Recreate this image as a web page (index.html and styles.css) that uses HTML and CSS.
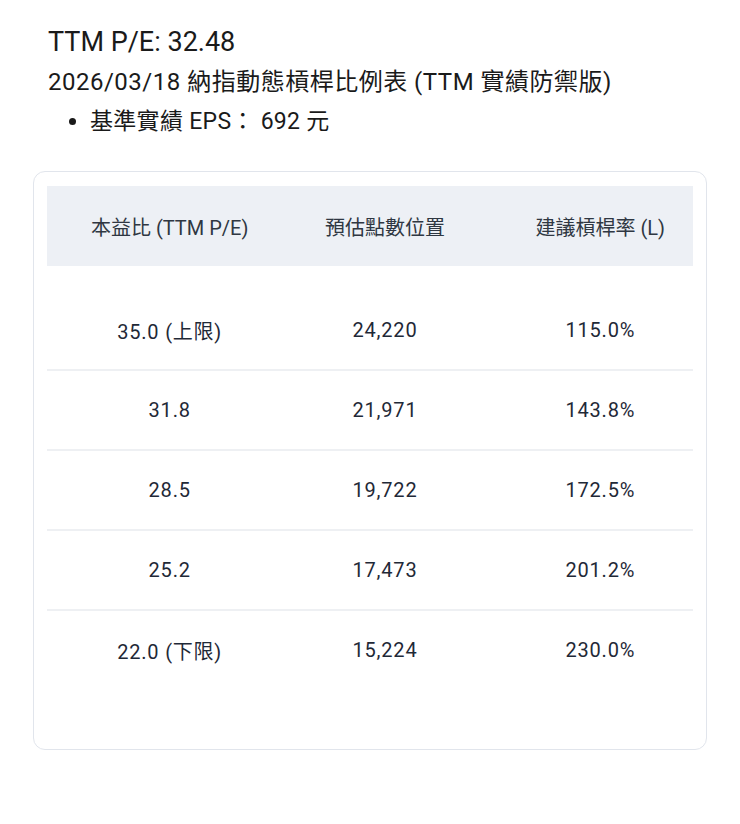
FILE: index.html
```html
<!DOCTYPE html>
<html lang="zh-Hant">
<head>
<meta charset="utf-8">
<link rel="stylesheet" href="styles.css">
</head>
<body>
<div class="page">
  <h2 class="title">TTM P/E: 32.48</h2>
  <p class="subtitle">2026/03/18 納指動態槓桿比例表 (TTM 實績防禦版)</p>
  <ul class="notes">
    <li>基準實績 EPS： 692 元</li>
  </ul>
  <div class="card">
    <table class="grid">
      <thead>
        <tr><th>本益比 (TTM P/E)</th><th>預估點數位置</th><th>建議槓桿率 (L)</th></tr>
      </thead>
      <tbody>
        <tr><td>35.0 (上限)</td><td>24,220</td><td>115.0%</td></tr>
        <tr><td>31.8</td><td>21,971</td><td>143.8%</td></tr>
        <tr><td>28.5</td><td>19,722</td><td>172.5%</td></tr>
        <tr><td>25.2</td><td>17,473</td><td>201.2%</td></tr>
        <tr><td>22.0 (下限)</td><td>15,224</td><td>230.0%</td></tr>
      </tbody>
    </table>
  </div>
</div>
</body>
</html>
```
FILE: styles.css
```css
html, body {
  margin: 0;
  padding: 0;
  background: #ffffff;
}
body {
  font-family: Roboto, "Noto Sans CJK TC", sans-serif;
  color: #1a1a1a;
}
.page {
  padding: 24px 33px 0 33px;
}
.title {
  margin: 0 0 0 15px;
  font-size: 27px;
  font-weight: 400;
  line-height: 36px;
}
.subtitle {
  margin: 5px 0 0 15px;
  font-size: 24px;
  line-height: 34px;
  letter-spacing: 0.5px;
}
.notes {
  margin: 7px 0 0 0;
  padding-left: 57px;
  font-size: 23px;
  line-height: 32px;
  letter-spacing: 0.3px;
}
.card {
  margin-top: 33px;
  border: 1px solid #e1e5ec;
  border-radius: 12px;
  padding: 14px 13px 60px 13px;
}
.grid {
  width: 100%;
  table-layout: fixed;
  border-collapse: collapse;
  color: #1f2937;
  font-size: 20px;
}
.grid thead tr {
  background: #edf0f5;
}
.grid th {
  height: 80px;
  font-weight: 400;
  color: #2f3742;
  padding: 0 0 0 30px;
  text-align: center;
}
.grid tbody::before {
  content: "";
  display: block;
  height: 25px;
}
.grid td {
  height: 78px;
  padding: 0 0 0 30px;
  text-align: center;
  letter-spacing: 0.8px;
  border-bottom: 2px solid #eef0f3;
}
.grid tbody tr:last-child td {
  border-bottom: none;
}
```
